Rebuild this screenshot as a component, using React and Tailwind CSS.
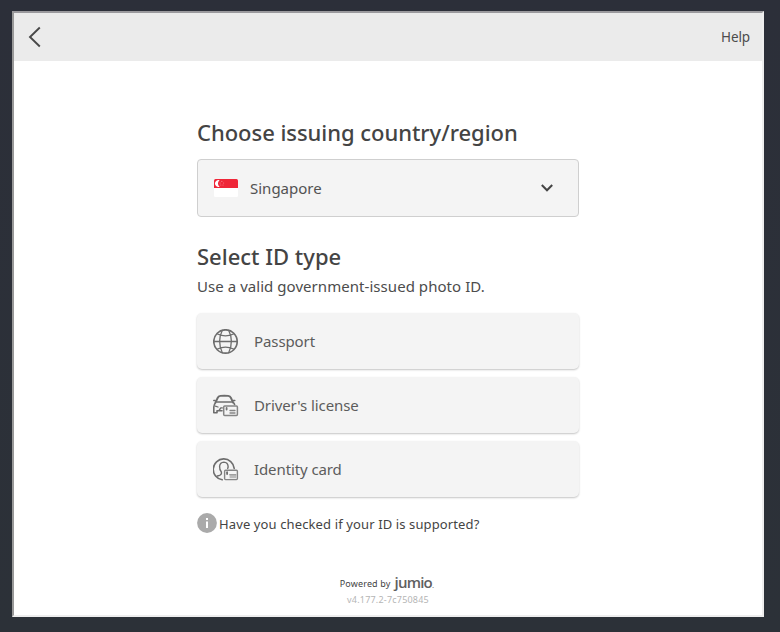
const stroke = { fill: 'none', stroke: '#6d6d6d', strokeWidth: 1.4, strokeLinecap: 'round', strokeLinejoin: 'round' };

function Globe() {
  return (
    <svg className="mt-0.5" width="26" height="26" viewBox="0 0 26 26" {...stroke}>
      <circle cx="12.5" cy="12.5" r="11.7" strokeWidth="1.7" />
      <path d="M.8 12.5H24.2M4.5 5Q12.5 8.6 20.5 5M4.5 20Q12.5 16.4 20.5 20" strokeWidth="1.3" />
      <path d="M9.3 1.3Q3.9 12.5 9.3 23.7M15.7 1.3Q21.1 12.5 15.7 23.7" strokeWidth="1.3" />
    </svg>
  );
}

function Car() {
  return (
    <svg className="mt-[3px]" width="26" height="26" viewBox="0 0 26 26" {...stroke}>
      <path d="M2.6 8.4L4.6 4Q5.4 2.2 7.4 1.9Q11.3 1.5 15.2 1.9Q17.2 2.2 18 4L20 8.4" strokeWidth="1.9" />
      <path d="M.8 6.6H2.2M20.4 6.6H21.8M4 8H18.6" strokeWidth="1.5" />
      <path d="M2.6 8.4Q.9 10.5 .8 13V18.7H4V16.7H9M20 8.4Q21.2 9.2 21.6 10.5" strokeWidth="1.6" />
      <path d="M2.4 12.2L5 13M6.3 16L7.8 13.9H9.3" strokeWidth="1.3" />
      <rect x="10.7" y="12" width="13.7" height="9.6" rx="1" stroke="#858585" strokeWidth="1.5" />
      <path d="M13.6 14V15.6" stroke="#757575" strokeWidth="1.8" />
      <path d="M17 16.5H22M17 19H22" stroke="#858585" strokeWidth="1.3" />
    </svg>
  );
}

function Person() {
  return (
    <svg className="mt-[3px]" width="26" height="26" viewBox="0 0 26 26" {...stroke}>
      <path d="M9.2 21.8A10.5 10.5 0 1 1 21.2 10.4" strokeWidth="1.6" />
      <path d="M4.2 18Q8 17.4 8.4 15.6V14Q6.4 12.1 6.6 8.2Q7 4.3 10.9 4.1Q14.7 4.3 15.1 8.2Q15.2 9.5 14.7 10.4" strokeWidth="1.4" />
      <rect x="11.6" y="12.3" width="12.8" height="9.3" rx="1" stroke="#858585" />
      <path d="M14.1 14.2V16.1" strokeWidth="1.8" />
      <rect x="16.6" y="16" width="6.7" height="4.2" fill="#bbb" stroke="none" />
      <path d="M16.6 16.7H22.8" stroke="#999" strokeWidth="1" />
    </svg>
  );
}

function Flag() {
  return (
    <svg width="24" height="18" viewBox="0 0 24 18">
      <rect width="24" height="18" rx="1.5" fill="#fff" />
      <path d="M0 9V1.5Q0 0 1.5 0H22.5Q24 0 24 1.5V9Z" fill="#ef2638" />
      <path d="M5.6 1.2A3.5 3.5 0 1 0 5.6 7.8A4.1 4.1 0 0 1 5.6 1.2Z" fill="#fff" />
      <g fill="#fff" fillOpacity=".4">
        <circle cx="7.8" cy="2.4" r=".6" /><circle cx="6.1" cy="4" r=".6" /><circle cx="9.6" cy="4" r=".6" />
        <circle cx="6.8" cy="6" r=".6" /><circle cx="9" cy="6" r=".6" />
      </g>
    </svg>
  );
}

function IdOption({ icon, label }) {
  return (
    <button className="flex h-14 w-[382px] items-center rounded-[5px] bg-[#f4f4f4] pl-4 text-left shadow-[0_1px_2px_#c4c4c4]">
      {icon}
      <span className="ml-[15px] text-[15px] leading-6 tracking-[-0.1px] text-[#5c5c5c]">{label}</span>
    </button>
  );
}

export default function App() {
  return (
    <div className="h-[632px] w-[780px] overflow-hidden bg-linear-to-b from-[#2c2f39] to-[#2c3138] pl-3 pt-[11px] font-['Noto_Sans',sans-serif] text-[#444]">
      <div className="h-[606px] w-[752px] border-2 border-t-[#9a999d] border-r-[#eee] border-b-[#eee] border-l-[#999] bg-white">
        <header className="flex h-12 items-center justify-between bg-[#ebebeb] pl-[14px] pr-3">
          <svg width="14" height="22" viewBox="0 0 14 22" fill="none" stroke="#484848" strokeWidth="1.9"><path d="M11.8 1.5L2 11L11.8 20.5" /></svg>
          <a className="text-[13.5px] leading-5 tracking-[-0.1px] text-[#4c4c4c]">Help</a>
        </header>
        <main className="ml-[183px] w-[382px] pt-14">
          <h1 className="h-[42px] whitespace-nowrap text-[22px] font-medium leading-[30px] tracking-[-0.04px]">Choose issuing country/region</h1>
          <div className="flex h-[58px] items-center rounded-[4px] border border-[#cfcfcf] bg-[#f4f4f4] pl-4 pr-[25px]">
            <Flag />
            <span className="ml-3 text-[15px] leading-6 text-[#525252]">Singapore</span>
            <svg className="ml-auto" width="12" height="8" viewBox="0 0 12 8" fill="none" stroke="#444" strokeWidth="2"><path d="M.8 1L6 6.3L11.2 1" /></svg>
          </div>
          <h2 className="mt-6 whitespace-nowrap text-[22px] font-medium leading-[30px]">Select ID type</h2>
          <p className="mt-[3px] whitespace-nowrap text-[15px] leading-6 tracking-[0.05px] text-[#4c4c4c]">Use a valid government-issued photo ID.</p>
          <div className="mt-[15px] flex flex-col gap-2">
            <IdOption icon={<Globe />} label="Passport" />
            <IdOption icon={<Car />} label="Driver's license" />
            <IdOption icon={<Person />} label="Identity card" />
          </div>
          <div className="mt-4 flex h-5 items-center gap-0.5">
            <svg width="20" height="20" viewBox="0 0 20 20"><circle cx="10" cy="10" r="9.9" fill="#aaa" /><path d="M9 5h2v2H9zM9 8.5h2V15H9z" fill="#fff" /></svg>
            <span className="whitespace-nowrap pt-0.5 text-[13px] leading-5 tracking-[0.12px]">Have you checked if your ID is supported?</span>
          </div>
        </main>
        <footer className="mt-[40px] flex flex-col items-center">
          <div className="flex h-5 items-center gap-1 pr-[3px]">
            <span className="pt-px text-[9px] leading-4 tracking-[0.15px]">Powered by</span>
            <span className="font-['Open_Sans',sans-serif] text-[15px] font-semibold leading-4 tracking-[-0.8px] text-[#606060]">jumio<span className="text-[8px] font-normal">.</span></span>
          </div>
          <span className="pt-px text-[9px] leading-3 tracking-[0.2px] text-[#b5b5b5]">v4.177.2-7c750845</span>
        </footer>
      </div>
    </div>
  );
}
